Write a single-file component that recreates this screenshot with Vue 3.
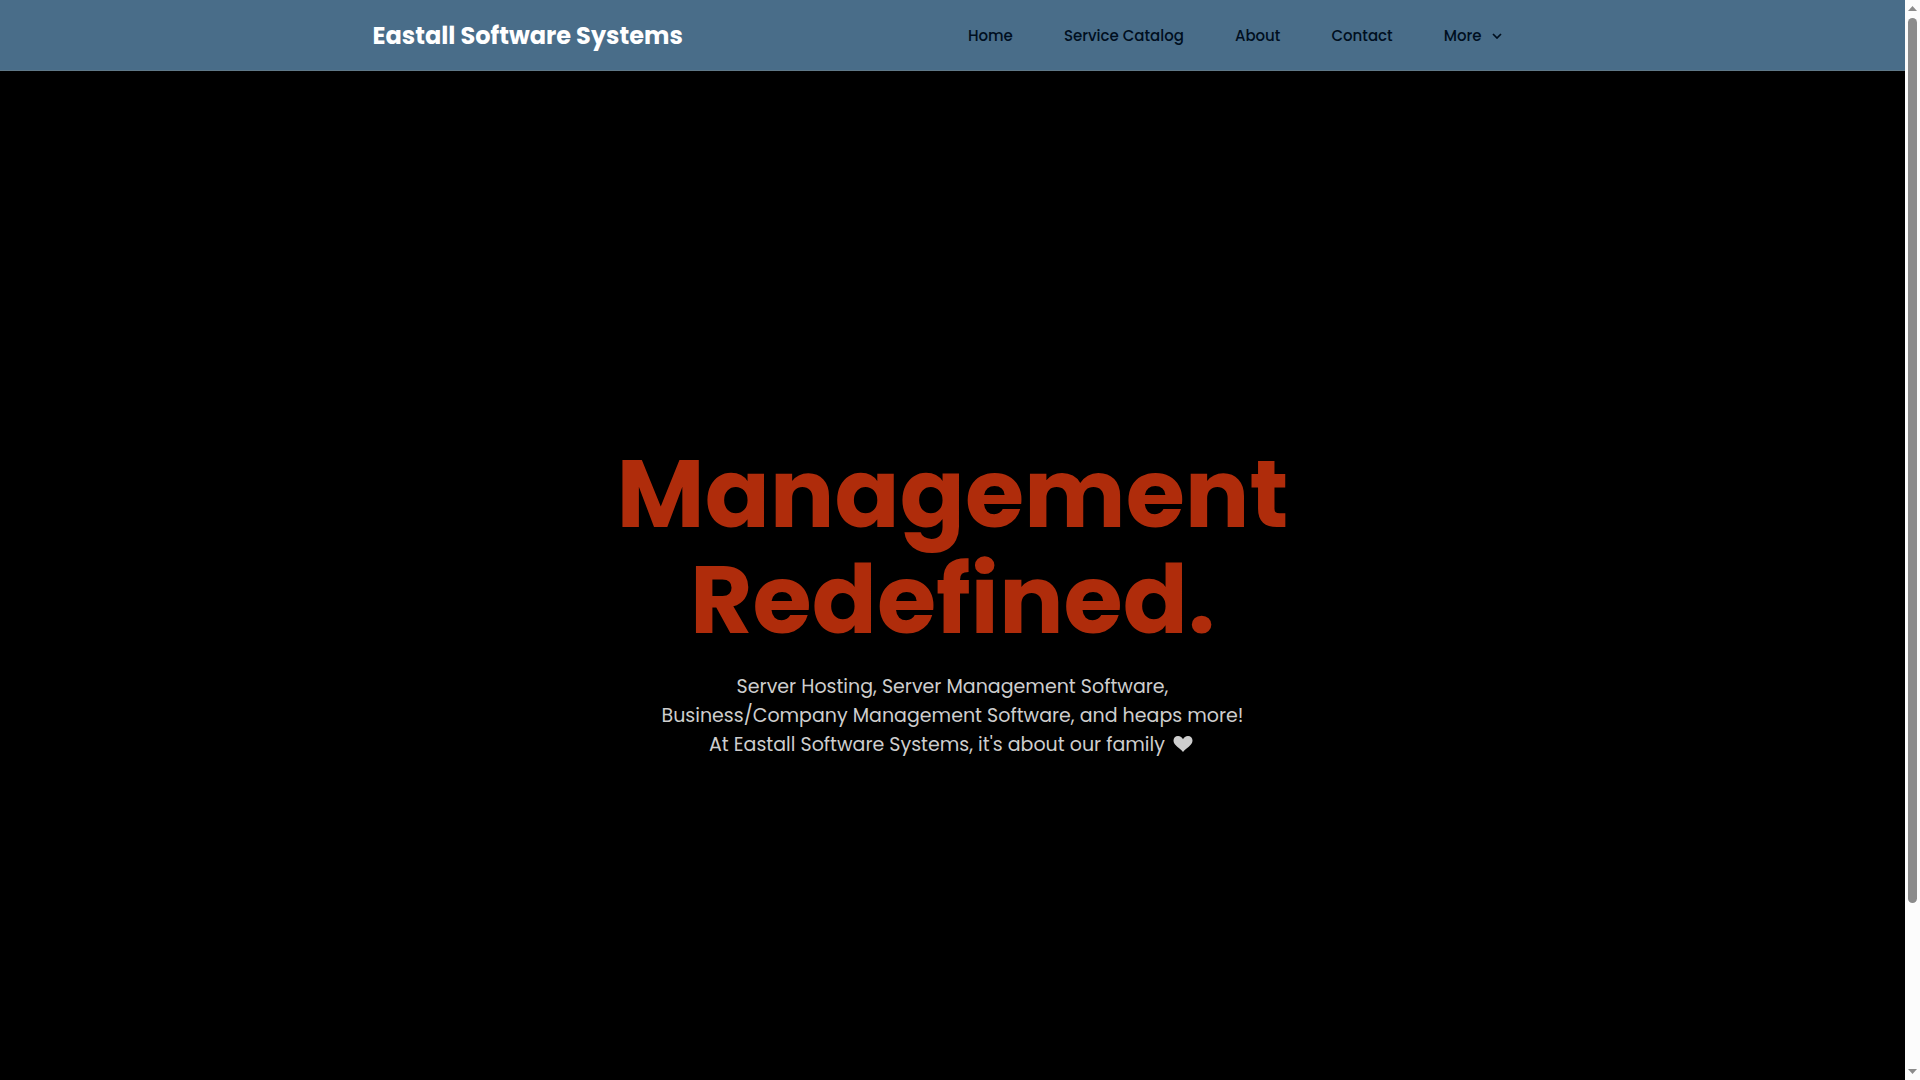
<script setup>
const links = [
  { label: 'Home', href: '#home' },
  { label: 'Service Catalog', href: '#service-catalog' },
  { label: 'About', href: '#about' },
  { label: 'Contact', href: '#contact' },
]
</script>

<template>
  <div class="window">
    <div class="page">
      <header class="site-header">
        <div class="header-inner">
          <a class="brand" href="#home">Eastall Software Systems</a>
          <nav class="nav" aria-label="Main">
            <a v-for="link in links" :key="link.label" class="nav-item" :href="link.href">{{ link.label }}</a>
            <button class="nav-item more" type="button" aria-haspopup="true">
              More
              <svg class="chevron" viewBox="0 0 10 6" aria-hidden="true">
                <path d="M1 1l4 4 4-4" fill="none" stroke="currentColor" stroke-width="1.700" />
              </svg>
            </button>
          </nav>
        </div>
      </header>
      <main class="hero">
        <h1>Management<br />Redefined.</h1>
        <p>
          Server Hosting, Server Management Software,<br />
          Business/Company Management Software, and heaps more!<br />
          At Eastall Software Systems, it's about our family
          <svg class="heart" viewBox="0 0 20 16" role="img" aria-label="heart">
            <path d="M10 16C8.500 14 4.500 11.500 2.300 8.800C1.100 7.300 0.500 6 0.500 4.500C0.500 2 2.400 0 5 0C7.300 0 9.200 1.400 10 3.200C10.800 1.400 12.700 0 15 0C17.600 0 19.500 2 19.500 4.500C19.500 6 18.900 7.300 17.700 8.800C15.500 11.500 11.500 14 10 16Z" fill="currentColor" />
          </svg>
        </p>
      </main>
    </div>
    <div class="scrollbar" aria-hidden="true">
      <svg class="arrow" viewBox="0 0 9 5"><path d="M0 5L4.500 0L9 5Z" fill="#8b8b8b" /></svg>
      <div class="track"><div class="thumb"></div></div>
      <svg class="arrow" viewBox="0 0 9 5"><path d="M0 0H9L4.500 5Z" fill="#8b8b8b" /></svg>
    </div>
  </div>
</template>

<style>
body {
  margin: 0;
  background: #000;
}
</style>

<style scoped>
.window {
  display: flex;
  min-height: 100vh;
  font-family: Poppins, Inter, sans-serif;
}
.page {
  flex: 1;
  display: flex;
  flex-direction: column;
  background: #000;
}
.site-header {
  background: #496d89;
  border-bottom: 1px solid #5f7887;
}
.header-inner {
  display: flex;
  align-items: center;
  justify-content: space-between;
  box-sizing: border-box;
  max-width: 1160px;
  height: 70px;
  margin: 0 auto;
  padding: 2px 31px 0 0;
}
.brand {
  color: #fff;
  font-size: 24px;
  font-weight: 700;
  line-height: 30px;
  text-decoration: none;
  white-space: nowrap;
}
.nav {
  display: flex;
  align-items: center;
  gap: 51px;
}
.nav-item {
  padding: 0;
  border: 0;
  background: none;
  color: #000f1f;
  font-family: inherit;
  font-size: 15px;
  font-weight: 500;
  line-height: 20px;
  text-decoration: none;
  white-space: nowrap;
}
.more {
  display: flex;
  align-items: center;
  gap: 10px;
}
.chevron {
  width: 10px;
  height: 6px;
}
.hero {
  flex: 1;
  display: flex;
  flex-direction: column;
  align-items: center;
  justify-content: center;
  padding-top: 48px;
  text-align: center;
}
h1 {
  margin: 0 0 19px;
  color: #af2c0b;
  font-size: 96px;
  font-weight: 700;
  line-height: 106px;
}
p {
  margin: 0;
  color: #cecece;
  font-size: 19px;
  line-height: 29px;
}
.heart {
  width: 20px;
  height: 16px;
  margin: 0 3px;
  vertical-align: -1px;
}
.scrollbar {
  display: flex;
  flex-direction: column;
  align-items: center;
  width: 15px;
  padding: 6px 0;
  box-sizing: border-box;
  background: #fcfcfc;
}
.arrow {
  width: 9px;
  height: 5px;
}
.track {
  flex: 1;
  width: 9px;
  margin: 7px 0;
}
.thumb {
  height: calc(85% - 2px);
  border-radius: 5px;
  background: #8b8b8b;
}
</style>
